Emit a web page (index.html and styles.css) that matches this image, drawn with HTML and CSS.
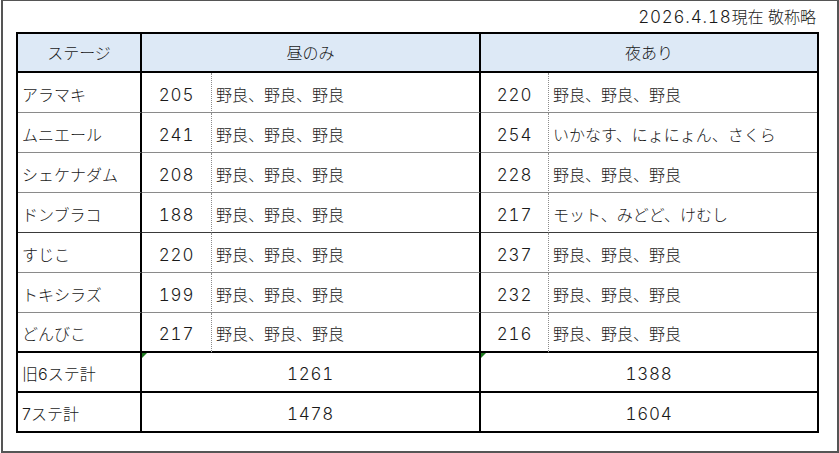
FILE: index.html
```html
<!DOCTYPE html>
<html lang="ja">
<head>
<meta charset="utf-8">
<title>ステージ集計</title>
<link rel="stylesheet" href="styles.css">
</head>
<body>
<div class="frame">
  <div class="note"><span class="digits">2026.4.18</span>現在 敬称略</div>
  <table class="sheet">
    <colgroup>
      <col class="c-stage">
      <col class="c-num">
      <col class="c-names">
      <col class="c-num2">
      <col class="c-names2">
    </colgroup>
    <thead>
      <tr class="head">
        <th class="stage">ステージ</th>
        <th colspan="2" class="day">昼のみ</th>
        <th colspan="2">夜あり</th>
      </tr>
    </thead>
    <tbody>
      <tr class="row"><td class="stage">アラマキ</td><td class="num">205</td><td class="names day">野良、野良、野良</td><td class="num">220</td><td class="names">野良、野良、野良</td></tr>
      <tr class="row"><td class="stage">ムニエール</td><td class="num">241</td><td class="names day">野良、野良、野良</td><td class="num">254</td><td class="names">いかなす、にょにょん、さくら</td></tr>
      <tr class="row"><td class="stage">シェケナダム</td><td class="num">208</td><td class="names day">野良、野良、野良</td><td class="num">228</td><td class="names">野良、野良、野良</td></tr>
      <tr class="row dark"><td class="stage">ドンブラコ</td><td class="num">188</td><td class="names day">野良、野良、野良</td><td class="num">217</td><td class="names">モット、みどど、けむし</td></tr>
      <tr class="row"><td class="stage">すじこ</td><td class="num">220</td><td class="names day">野良、野良、野良</td><td class="num">237</td><td class="names">野良、野良、野良</td></tr>
      <tr class="row"><td class="stage">トキシラズ</td><td class="num">199</td><td class="names day">野良、野良、野良</td><td class="num">232</td><td class="names">野良、野良、野良</td></tr>
      <tr class="row last"><td class="stage">どんびこ</td><td class="num">217</td><td class="names day">野良、野良、野良</td><td class="num">216</td><td class="names">野良、野良、野良</td></tr>
      <tr class="total"><td class="stage">旧6ステ計</td><td colspan="2" class="sum day flag">1261</td><td colspan="2" class="sum flag">1388</td></tr>
      <tr class="total end"><td class="stage">7ステ計</td><td colspan="2" class="sum day">1478</td><td colspan="2" class="sum">1604</td></tr>
    </tbody>
  </table>
</div>
</body>
</html>
```

FILE: styles.css
```css
html, body {
  margin: 0;
  padding: 0;
  background: #ffffff;
}

body {
  font-family: "Inter", "Noto Sans CJK JP", sans-serif;
  font-weight: 300;
  font-size: 16px;
  color: #1a1a1a;
}

.frame {
  box-sizing: border-box;
  width: 838px;
  height: 453px;
  margin-left: 1px;
  border: 2px solid #555555;
  border-top-width: 1px;
  padding-top: 6px;
}

.note {
  height: 25px;
  line-height: 20px;
  text-align: right;
  padding-right: 21px;
}

.digits {
  font-size: 17px;
  letter-spacing: 0.8px;
  font-variant-numeric: tabular-nums;
}

.sheet {
  margin-left: 13px;
  border-collapse: separate;
  border-spacing: 0;
  border: 2px solid #000000;
  table-layout: fixed;
  width: 803px;
}

.c-stage { width: 124px; }
.c-num { width: 70px; }
.c-names { width: 269px; }
.c-num2 { width: 68px; }
.c-names2 { width: 268px; }

th, td {
  box-sizing: border-box;
  padding: 0;
  font-weight: 300;
  white-space: nowrap;
  vertical-align: middle;
  line-height: 20px;
}

.head th {
  background: #dde9f6;
  height: 39px;
  border-bottom: 2px solid #000000;
  text-align: center;
  padding-top: 1px;
}

.stage {
  border-right: 2px solid #000000;
  text-align: left;
  padding-left: 4px;
}

.head th.stage {
  text-align: center;
  padding-left: 0;
}

.day {
  border-right: 2px solid #000000;
}

.row td {
  height: 40px;
  border-bottom: 1px solid #8a8a8a;
  padding-top: 4px;
}

.row.dark td {
  border-bottom-color: #3a3a3a;
}

.row.last td {
  border-bottom: 2px solid #000000;
}

.num {
  text-align: center;
  font-size: 17px;
  letter-spacing: 0.8px;
  font-variant-numeric: tabular-nums;
  border-right: 1px dotted #8c8c8c;
}

.row td.names {
  padding-left: 4px;
}

.total td {
  height: 40px;
  border-bottom: 2px solid #000000;
  padding-top: 3px;
}

.total.end td {
  border-bottom: none;
  height: 38px;
}

.sum {
  text-align: center;
  font-size: 17px;
  letter-spacing: 0.8px;
  font-variant-numeric: tabular-nums;
  position: relative;
}

.flag::before {
  content: "";
  position: absolute;
  left: 0;
  top: 0;
  width: 0;
  height: 0;
  border-top: 5px solid #1f7a1f;
  border-right: 5px solid transparent;
}
```
